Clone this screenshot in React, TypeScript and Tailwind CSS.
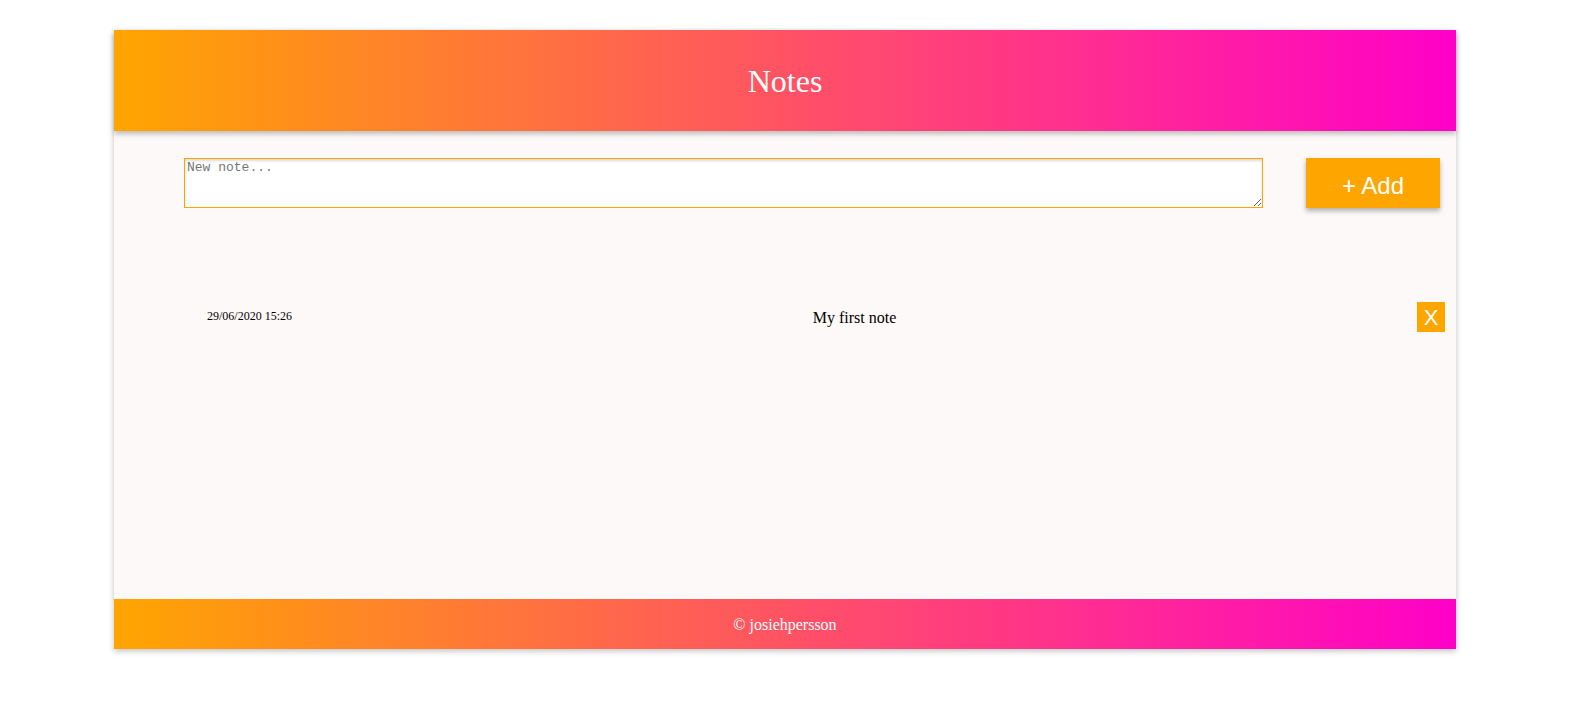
import React from "react";

export default function App() {
  return (
    <div className="min-h-[708px] bg-white pt-[30px]">
      <div className="mx-auto flex h-[619px] w-[1342px] flex-col bg-[#fdf9f8] shadow-[0_2px_6px_rgba(0,0,0,0.25)]">
        <header className="relative z-10 flex h-[101px] items-center justify-center bg-[linear-gradient(to_right,#ffa500,#ff00c8)] shadow-[0_3px_5px_rgba(0,0,0,0.25)]">
          <h1 className="mt-[1px] font-['Liberation_Serif',serif] text-[32px] text-white">Notes</h1>
        </header>

        <main className="flex-1">
          <div className="flex items-start pt-[27px] pl-[70px]">
            <textarea
              placeholder="New note..."
              className="h-[50px] w-[1079px] resize border border-[#ffa500] bg-white px-[2px] py-[1px] font-['Liberation_Mono',monospace] text-[13px] leading-[15px] shadow-[inset_0_2px_3px_rgba(0,0,0,0.15)] outline-none placeholder:text-[#757575]"
            />
            <button className="ml-[43px] h-[50px] w-[134px] bg-[#ffa500] pt-[5px] font-['Liberation_Sans',sans-serif] text-[24px] text-white shadow-[0_3px_5px_rgba(0,0,0,0.3)]">
              + Add
            </button>
          </div>

          <div className="mt-[94px] ml-[93px] mr-[11px] flex items-center justify-between font-['Liberation_Serif',serif]">
            <span className="-mt-[2px] text-[12px] text-black">29/06/2020 15:26</span>
            <span className="mt-[1px] text-[16px] text-black">My first note</span>
            <button className="flex h-[30px] w-[28px] items-center justify-center bg-[#ffa500] font-['Liberation_Sans',sans-serif] text-[22px] text-white">
              X
            </button>
          </div>
        </main>

        <footer className="flex h-[50px] items-center justify-center bg-[linear-gradient(to_right,#ffa500,#ff00c8)]">
          <span className="mt-[1px] font-['Liberation_Serif',serif] text-[16px] text-white">© josiehpersson</span>
        </footer>
      </div>
    </div>
  );
}
